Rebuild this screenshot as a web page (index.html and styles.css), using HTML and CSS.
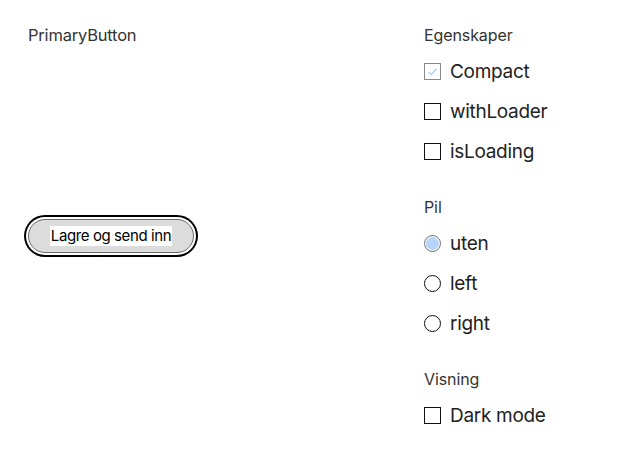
FILE: index.html
```html
<!DOCTYPE html>
<html lang="no">
<head>
<meta charset="utf-8">
<link rel="stylesheet" href="styles.css">
</head>
<body>
<div class="page">
  <div class="preview">
    <div class="title">PrimaryButton</div>
    <div class="stage">
      <button class="btn"><span class="btn-label">Lagre og send inn</span></button>
    </div>
  </div>
  <div class="controls">
    <div class="group">
      <div class="legend">Egenskaper</div>
      <label class="opt"><span class="box checked"><svg viewBox="0 0 17 17" width="17" height="17"><path d="M4.5 9 L7.2 11.6 L12.5 5.8" fill="none" stroke="#b6d5fb" stroke-width="1.5"/></svg></span>Compact</label>
      <label class="opt"><span class="box"></span>withLoader</label>
      <label class="opt"><span class="box"></span>isLoading</label>
    </div>
    <div class="group">
      <div class="legend">Pil</div>
      <label class="opt"><span class="radio on"></span>uten</label>
      <label class="opt"><span class="radio"></span>left</label>
      <label class="opt"><span class="radio"></span>right</label>
    </div>
    <div class="group">
      <div class="legend">Visning</div>
      <label class="opt"><span class="box"></span>Dark mode</label>
    </div>
  </div>
</div>
</body>
</html>
```
FILE: styles.css
```css
* { box-sizing: border-box; }
html, body { margin: 0; background: #fff; }
body { font-family: Inter, "Liberation Sans", sans-serif; color: #262626; }
.page { display: flex; padding: 25px 0 0 28px; }
.preview { width: 396px; }
.title { font-size: 16.5px; line-height: 20px; color: #333; letter-spacing: -0.2px; }
.stage { margin-top: 170px; margin-left: -4px; }
.btn {
  display: inline-flex; align-items: center; justify-content: center;
  width: 166px; height: 34px; margin: 4px;
  border: 1px solid #6b6b6b; border-radius: 17px; background: #dcdcdc;
  box-shadow: 0 0 0 2px #fff, 0 0 0 4px #000;
  font-family: inherit; padding: 0; cursor: pointer;
}
.btn-label { background: #fff; color: #000; font-size: 15px; line-height: 20px; padding: 0 1px; letter-spacing: -0.4px; }
.controls { display: flex; flex-direction: column; gap: 26px; }
.group { display: flex; flex-direction: column; }
.legend { font-size: 16px; line-height: 20px; color: #333; margin-bottom: 6px; letter-spacing: -0.1px; }
.opt { display: flex; align-items: center; height: 40px; font-size: 19px; color: #222; gap: 9px; letter-spacing: -0.3px; }
.box { width: 17px; height: 17px; border: 1px solid #111; display: inline-block; flex: none; position: relative; }
.box.checked { border-color: #888; }
.box svg { position: absolute; left: -1px; top: -1px; }
.radio { width: 17px; height: 17px; border: 1px solid #111; border-radius: 50%; display: inline-block; flex: none; }
.radio.on { border-color: #777; background: #b6d5fb; box-shadow: inset 0 0 0 1px #fff; }
```
